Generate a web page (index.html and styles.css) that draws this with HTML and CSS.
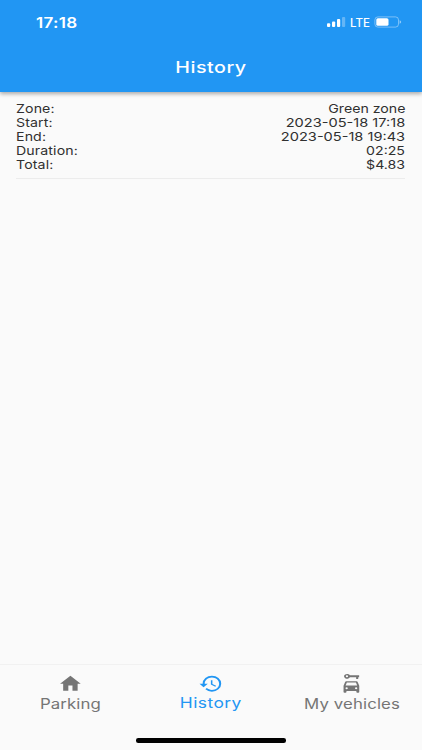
FILE: index.html
```html
<!DOCTYPE html>
<html lang="en">
<head>
<meta charset="utf-8">
<title>History</title>
<link rel="stylesheet" href="styles.css">
</head>
<body>
<div class="app">
  <header class="appbar">
    <div class="status">
      <span class="time">17:18</span>
      <svg class="signal" width="20" height="12" viewBox="0 0 20 12" fill="#fff"><rect x="1" y="7.3" width="3.2" height="3.7" rx="1"/><rect x="6" y="5.5" width="3.2" height="5.5" rx="1"/><rect x="11" y="3" width="3.2" height="8" rx="1"/><rect x="16" y="1" width="3.2" height="10" rx="1" opacity=".3"/></svg>
      <span class="lte">LTE</span>
      <svg class="battery" width="28" height="12" viewBox="0 0 28 12"><rect x=".9" y=".9" width="23.6" height="10.2" rx="3" fill="none" stroke="#fff" stroke-opacity=".4"/><rect x="2.3" y="2.2" width="12.2" height="7.6" rx="1.6" fill="#fff"/><path d="M25.6 4.2q1.6.5 1.6 1.8t-1.6 1.8z" fill="#fff" opacity=".5"/></svg>
    </div>
    <h1 class="title">History</h1>
  </header>
  <main class="content">
    <dl class="entry">
      <div class="row"><dt>Zone:</dt><dd>Green zone</dd></div>
      <div class="row"><dt>Start:</dt><dd class="num">2023-05-18 17:18</dd></div>
      <div class="row"><dt>End:</dt><dd class="num">2023-05-18 19:43</dd></div>
      <div class="row"><dt>Duration:</dt><dd>02:25</dd></div>
      <div class="row"><dt>Total:</dt><dd>$4.83</dd></div>
    </dl>
  </main>
  <nav class="tabs">
    <a class="tab">
      <svg class="icon" viewBox="0 0 24 24" preserveAspectRatio="none"><path d="M10 20v-6h4v6h5v-8h3L12 3 2 12h3v8z"/></svg>
      <span class="label">Parking</span>
    </a>
    <a class="tab active">
      <svg class="icon" viewBox="0.5 0 24 24" preserveAspectRatio="none"><path d="M13 3a9 9 0 0 0-9 9H1l3.89 3.89.07.14L9 12H6c0-3.87 3.13-7 7-7s7 3.13 7 7-3.13 7-7 7c-1.93 0-3.68-.79-4.94-2.06l-1.42 1.42A8.95 8.95 0 0 0 13 21a9 9 0 0 0 0-18zm-1 5v5l4.28 2.54.72-1.21-3.5-2.08V8z"/></svg>
      <span class="label">History</span>
    </a>
    <a class="tab">
      <svg class="icon" viewBox="0 0 24 24" preserveAspectRatio="none"><path fill-rule="evenodd" d="M10.6 2.6a3 2.7 0 1 0 0 2.2H16.6v1.8h2V4.8h.9V2.6zM7.7 4.8a1.1 1.1 0 1 1 0-2.2 1.1 1.1 0 0 1 0 2.2zM17 9.2H7c-.43 0-.81.28-.95.68L4.4 14.4v6.8c0 .55.4.9.9.9h1c.5 0 .9-.4.9-.9v-.9h9.6v.9c0 .55.4.9.9.9h1c.5 0 .9-.4.9-.9v-6.8l-1.65-4.52a1 1 0 0 0-.95-.68zM7.6 10.7h8.8l1.2 3.3H6.4zM7.4 18.1a1.1 1.1 0 1 1 0-2.2 1.1 1.1 0 0 1 0 2.2zm9.2 0a1.1 1.1 0 1 1 0-2.2 1.1 1.1 0 0 1 0 2.2z"/></svg>
      <span class="label">My vehicles</span>
    </a>
  </nav>
  <div class="home-area"><div class="home-bar"></div></div>
</div>
</body>
</html>
```
FILE: styles.css
```css
* { box-sizing: border-box; margin: 0; padding: 0; }

body {
  background: #fafafa;
  font-family: Inter, "Liberation Sans", sans-serif;
  overflow: hidden;
}

.app {
  display: flex;
  flex-direction: column;
  width: 422px;
  height: 750px;
}

.appbar {
  display: flex;
  flex-direction: column;
  height: 92px;
  background: #2196f3;
  color: #fff;
  box-shadow: 0 2px 4px rgba(0, 0, 0, .32);
}

.status {
  display: flex;
  align-items: center;
  height: 44px;
  padding: 0 20px 0 36px;
}

.time {
  margin-right: auto;
  font-size: 14px;
  font-weight: 600;
  letter-spacing: .2px;
  transform: scaleX(1.22);
  transform-origin: left;
}

.lte {
  width: 20px;
  margin: 1px 4px 0;
  font-size: 11.5px;
  font-weight: 500;
}

.title {
  align-self: center;
  height: 46px;
  line-height: 46px;
  font-size: 16px;
  font-weight: 500;
  letter-spacing: .4px;
  transform: scaleX(1.23);
}

.content {
  flex: 1;
  padding: 9.5px 17px 0 16px;
}

.entry {
  height: 77.5px;
  border-bottom: 1px solid #ececec;
}

.row {
  display: flex;
  justify-content: space-between;
  height: 14.2px;
  line-height: 14.2px;
  font-size: 12px;
  color: #303030;
}

.row dt {
  letter-spacing: .1px;
  transform: scaleX(1.18);
  transform-origin: left;
}

.row dd {
  transform: scaleX(1.18);
  transform-origin: right;
}

.row .num {
  transform: scaleX(1.217);
}

.tabs {
  display: grid;
  grid-template-columns: repeat(3, 1fr);
  height: 54px;
  padding-top: 8px;
  border-top: 1px solid #f1f1f1;
  color: #757575;
}

.tab {
  display: flex;
  flex-direction: column;
  align-items: center;
}

.icon {
  width: 24.8px;
  height: 21.4px;
  fill: currentColor;
}

.label {
  font-size: 14px;
  line-height: 19px;
  white-space: nowrap;
  letter-spacing: .1px;
  transform: scaleX(1.2);
}

.active { color: #2196f3; }

.active .label {
  font-size: 14.5px;
  line-height: 18px;
  letter-spacing: .35px;
}

.home-area {
  display: flex;
  justify-content: center;
  height: 32px;
  padding-top: 20px;
}

.home-bar {
  width: 150px;
  height: 4.5px;
  border-radius: 2.25px;
  background: #000;
}
```
